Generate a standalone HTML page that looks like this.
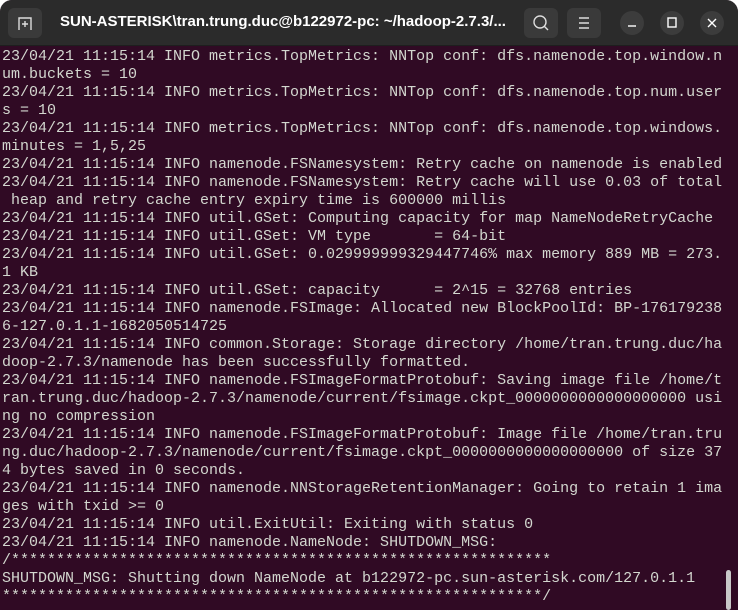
<!DOCTYPE html>
<html><head><style>
html,body{margin:0;padding:0;background:#fff;width:738px;height:610px;overflow:hidden}
.win{position:absolute;left:0;top:0;width:738px;height:610px;background:#300a24;border-radius:12px 12px 0 0;overflow:hidden}
.hdr{position:absolute;left:0;top:0;width:738px;height:45px;background:#2b2b2b;border-bottom:1px solid #1e1e1e}
.btn{position:absolute;top:8px;width:34px;height:30px;background:#3a3a3a;border-radius:6px}
.circ{position:absolute;top:11px;width:24px;height:24px;border-radius:12px;background:#3c3c3c;color:#fff;font:14px "Liberation Sans",sans-serif;text-align:center;line-height:24px}
.title{position:absolute;left:60px;top:13px;color:#fff;font:bold 15px "Liberation Sans",sans-serif;white-space:nowrap}
pre{position:absolute;left:2px;top:48px;margin:0;font:15px/18px "Liberation Mono",monospace;color:#d3d7cf;white-space:pre}
.sb{position:absolute;left:726px;top:570px;width:5px;height:40px;background:#c8c8c8;border-radius:3px}
</style></head><body>
<div class="win">
<div class="hdr">
<div class="btn" style="left:8px"><svg width="34" height="30"><path d="M11 22V10h12v12M17 13v6M14 16h6" stroke="#ddd" stroke-width="1.4" fill="none"/></svg></div>
<div class="title">SUN-ASTERISK\tran.trung.duc@b122972-pc: ~/hadoop-2.7.3/...</div>
<div class="btn" style="left:524px"><svg width="34" height="30"><circle cx="16" cy="14" r="6" stroke="#ddd" stroke-width="1.4" fill="none"/><path d="M20 18l4 4" stroke="#ddd" stroke-width="1.4"/></svg></div>
<div class="btn" style="left:567px"><svg width="34" height="30"><path d="M12 10h10M12 15h10M12 20h10" stroke="#ddd" stroke-width="1.4"/></svg></div>
<div class="circ" style="left:620px"><svg width="24" height="24"><path d="M8 15h8" stroke="#fff" stroke-width="1.4"/></svg></div>
<div class="circ" style="left:660px"><svg width="24" height="24"><rect x="8" y="7" width="8" height="9" stroke="#fff" stroke-width="1.4" fill="none"/></svg></div>
<div class="circ" style="left:700px"><svg width="24" height="24"><path d="M8 8l8 8M16 8l-8 8" stroke="#fff" stroke-width="1.4"/></svg></div>
</div>
<pre>23/04/21 11:15:14 INFO metrics.TopMetrics: NNTop conf: dfs.namenode.top.window.n
um.buckets = 10
23/04/21 11:15:14 INFO metrics.TopMetrics: NNTop conf: dfs.namenode.top.num.user
s = 10
23/04/21 11:15:14 INFO metrics.TopMetrics: NNTop conf: dfs.namenode.top.windows.
minutes = 1,5,25
23/04/21 11:15:14 INFO namenode.FSNamesystem: Retry cache on namenode is enabled
23/04/21 11:15:14 INFO namenode.FSNamesystem: Retry cache will use 0.03 of total
 heap and retry cache entry expiry time is 600000 millis
23/04/21 11:15:14 INFO util.GSet: Computing capacity for map NameNodeRetryCache
23/04/21 11:15:14 INFO util.GSet: VM type       = 64-bit
23/04/21 11:15:14 INFO util.GSet: 0.029999999329447746% max memory 889 MB = 273.
1 KB
23/04/21 11:15:14 INFO util.GSet: capacity      = 2^15 = 32768 entries
23/04/21 11:15:14 INFO namenode.FSImage: Allocated new BlockPoolId: BP-176179238
6-127.0.1.1-1682050514725
23/04/21 11:15:14 INFO common.Storage: Storage directory /home/tran.trung.duc/ha
doop-2.7.3/namenode has been successfully formatted.
23/04/21 11:15:14 INFO namenode.FSImageFormatProtobuf: Saving image file /home/t
ran.trung.duc/hadoop-2.7.3/namenode/current/fsimage.ckpt_0000000000000000000 usi
ng no compression
23/04/21 11:15:14 INFO namenode.FSImageFormatProtobuf: Image file /home/tran.tru
ng.duc/hadoop-2.7.3/namenode/current/fsimage.ckpt_0000000000000000000 of size 37
4 bytes saved in 0 seconds.
23/04/21 11:15:14 INFO namenode.NNStorageRetentionManager: Going to retain 1 ima
ges with txid &gt;= 0
23/04/21 11:15:14 INFO util.ExitUtil: Exiting with status 0
23/04/21 11:15:14 INFO namenode.NameNode: SHUTDOWN_MSG:
/************************************************************
SHUTDOWN_MSG: Shutting down NameNode at b122972-pc.sun-asterisk.com/127.0.1.1
************************************************************/
</pre>
<div class="sb"></div>
</div>
</body></html>
